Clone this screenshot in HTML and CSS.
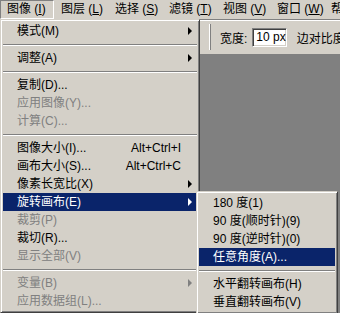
FILE: index.html
```html
<!DOCTYPE html>
<html lang="zh-CN">
<head>
  <meta charset="UTF-8" />
  <title>图像菜单</title>
  <link rel="stylesheet" href="styles.css">
</head>
<body>
  <div class="menubar">
    <span class="bar-item open">图像 (<u>I</u>)</span>
    <span class="bar-item">图层 (<u>L</u>)</span>
    <span class="bar-item">选择 (<u>S</u>)</span>
    <span class="bar-item">滤镜 (<u>T</u>)</span>
    <span class="bar-item">视图 (<u>V</u>)</span>
    <span class="bar-item">窗口 (<u>W</u>)</span>
    <span class="bar-item">帮助 (<u>H</u>)</span>
  </div>

  <div class="toolbar">
    <span class="grip"></span>
    <span class="label">宽度:</span>
    <span class="field">10 px</span>
    <span class="label next">边对比度:</span>
  </div>

  <div class="canvas"></div>

  <!-- Image menu -->
  <div class="menu main-menu">
    <div class="item"><span class="text">模式(M)</span><span class="sub"></span></div>
    <div class="sep"></div>
    <div class="item"><span class="text">调整(A)</span><span class="sub"></span></div>
    <div class="sep"></div>
    <div class="item"><span class="text">复制(D)...</span></div>
    <div class="item disabled"><span class="text">应用图像(Y)...</span></div>
    <div class="item disabled"><span class="text">计算(C)...</span></div>
    <div class="sep"></div>
    <div class="item"><span class="text">图像大小(I)...</span><span class="key">Alt+Ctrl+I</span></div>
    <div class="item"><span class="text">画布大小(S)...</span><span class="key">Alt+Ctrl+C</span></div>
    <div class="item"><span class="text">像素长宽比(X)</span><span class="sub"></span></div>
    <div class="item active"><span class="text">旋转画布(E)</span><span class="sub"></span></div>
    <div class="item disabled"><span class="text">裁剪(P)</span></div>
    <div class="item"><span class="text">裁切(R)...</span></div>
    <div class="item disabled"><span class="text">显示全部(V)</span></div>
    <div class="sep"></div>
    <div class="item disabled"><span class="text">变量(B)</span><span class="sub"></span></div>
    <div class="item disabled"><span class="text">应用数据组(L)...</span></div>
  </div>

  <!-- Rotate canvas submenu -->
  <div class="menu sub-menu">
    <div class="item"><span class="text">180 度(1)</span></div>
    <div class="item"><span class="text">90 度(顺时针)(9)</span></div>
    <div class="item"><span class="text">90 度(逆时针)(0)</span></div>
    <div class="item active"><span class="text">任意角度(A)...</span></div>
    <div class="sep"></div>
    <div class="item"><span class="text">水平翻转画布(H)</span></div>
    <div class="item"><span class="text">垂直翻转画布(V)</span></div>
  </div>
</body>
</html>
```

FILE: styles.css
```css
* {
  margin: 0;
  padding: 0;
  box-sizing: border-box;
}

body {
  width: 340px;
  height: 313px;
  overflow: hidden;
  background: #d4d0c8;
  font-family: 'Liberation Sans', 'Noto Sans CJK SC', sans-serif;
  font-size: 12px;
  color: #000;
  display: flex;
  flex-direction: column;
}

/* top menu bar */
.menubar {
  height: 19px;
  display: flex;
  white-space: nowrap;
}

.bar-item {
  width: 54px;
  flex: none;
  padding-left: 7px;
  line-height: 19px;
}

.bar-item.open {
  padding-left: 6px;
  border: 1px solid;
  border-color: #808080 #fff #fff #808080;
  line-height: 17px;
}

/* options bar */
.toolbar {
  height: 35px;
  border-top: 1px solid #808080;
  box-shadow: inset 0 1px #fff;
  display: flex;
  align-items: center;
  padding-left: 209px;
  white-space: nowrap;
}

.grip {
  width: 2px;
  height: 26px;
  border-left: 1px solid #fff;
  border-right: 1px solid #808080;
  margin-right: 9px;
}

.label {
  margin-right: 5px;
}

.label.next {
  margin-left: 10px;
}

.field {
  width: 50px;
  height: 19px;
  background: #fff;
  border: 1px solid;
  border-color: #808080 #fff #fff #808080;
  box-shadow: inset 1px 1px #404040, inset -1px -1px #d4d0c8;
  padding-left: 3px;
  line-height: 17px;
}

.canvas {
  flex: 1;
  background: #808080;
}

/* dropdown menus */
.menu {
  position: absolute;
  background: #d4d0c8;
  border: 1px solid;
  border-color: #d4d0c8 #404040 #404040 #d4d0c8;
  box-shadow: inset 1px 1px #fff, inset -1px -1px #808080;
  padding: 2px;
}

.main-menu {
  left: 0;
  top: 19px;
  width: 200px;
}

.sub-menu {
  left: 196px;
  top: 191px;
  width: 142px;
}

.item {
  height: 18px;
  line-height: 18px;
  display: flex;
  align-items: center;
  padding-left: 14px;
  padding-right: 5px;
  white-space: nowrap;
}

.item .text {
  flex: 1;
}

.item .key {
  margin-right: 11px;
}

.item .sub {
  width: 0;
  height: 0;
  border-left: 4px solid #000;
  border-top: 4px solid transparent;
  border-bottom: 4px solid transparent;
}

.item.disabled {
  color: #808080;
}

.item.disabled .sub {
  border-left-color: #808080;
}

.item.active {
  background: #0a246a;
  color: #fff;
}

.item.active .sub {
  border-left-color: #fff;
}

.sep {
  margin: 4px 0 3px;
  border-top: 1px solid #808080;
  border-bottom: 1px solid #fff;
}
```
